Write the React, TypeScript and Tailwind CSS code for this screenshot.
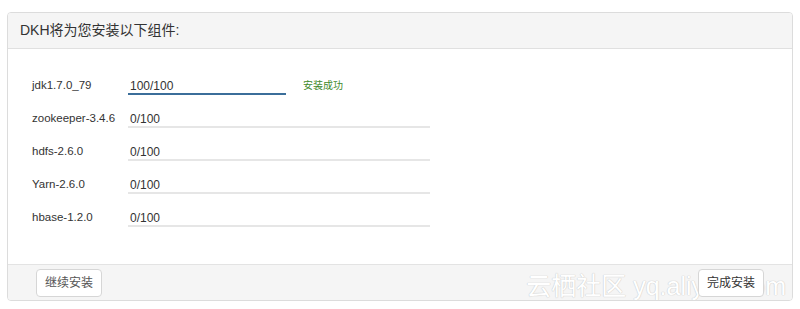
import React from 'react';

const font = { fontFamily: '"Liberation Sans", "Noto Sans CJK SC", sans-serif' };

const components = [
  { name: 'jdk1.7.0_79', progress: '100/100', done: true },
  { name: 'zookeeper-3.4.6', progress: '0/100', done: false },
  { name: 'hdfs-2.6.0', progress: '0/100', done: false },
  { name: 'Yarn-2.6.0', progress: '0/100', done: false },
  { name: 'hbase-1.2.0', progress: '0/100', done: false },
];

function Row({ name, progress, done }: { name: string; progress: string; done: boolean }) {
  return (
    <div className="flex items-center h-[33px]">
      <div className="w-[96px] text-[11.5px] text-[#333]">{name}</div>
      {done ? (
        <>
          <div className="w-[158px] h-[18px] flex items-start pl-[2px] text-[12px] text-[#333] border-b-2 border-[#3b6e9a]">
            {progress}
          </div>
          <div className="ml-[17px] text-[10px] text-[#3f8a2c]">安装成功</div>
        </>
      ) : (
        <div className="w-[302px] h-[18px] flex items-start pl-[2px] text-[12px] text-[#333] border-b-2 border-[#e6e6e6]">
          {progress}
        </div>
      )}
    </div>
  );
}

export default function App() {
  return (
    <div className="w-[800px] h-[309px] bg-white pt-[12px] px-[7px]" style={font}>
      <div className="relative w-[786px] border border-[#dcdcdc] rounded-[4px] overflow-hidden">
        {/* Header */}
        <div className="h-[36px] flex items-center pl-[12px] bg-[#f5f5f5] border-b border-[#e0e0e0] text-[14px] text-[#333]">
          DKH将为您安装以下组件:
        </div>

        {/* Component list */}
        <div className="h-[215px] pt-[20px] pl-[24px] bg-white">
          {components.map((c) => (
            <Row key={c.name} {...c} />
          ))}
        </div>

        {/* Footer */}
        <div className="relative h-[36px] flex items-center justify-between px-[28px] bg-[#f5f5f5] border-t border-[#e3e3e3]">
          {/* Watermark */}
          <div
            className="absolute right-[6px] bottom-[1px] text-[25px] leading-none text-white pointer-events-none whitespace-nowrap"
            style={{ textShadow: '0 0 1px #c8c8c8, 0 0 1px #c8c8c8' }}
          >
            云栖社区 yq.aliyun.com
          </div>
          <button className="relative z-10 h-[28px] w-[66px] rounded-[4px] border border-[#d6d6d6] bg-white text-[12px] text-[#555]">
            继续安装
          </button>
          <button className="relative z-10 h-[28px] w-[66px] rounded-[4px] border border-[#d6d6d6] bg-white text-[12px] text-[#333]">
            完成安装
          </button>
        </div>
      </div>
    </div>
  );
}
